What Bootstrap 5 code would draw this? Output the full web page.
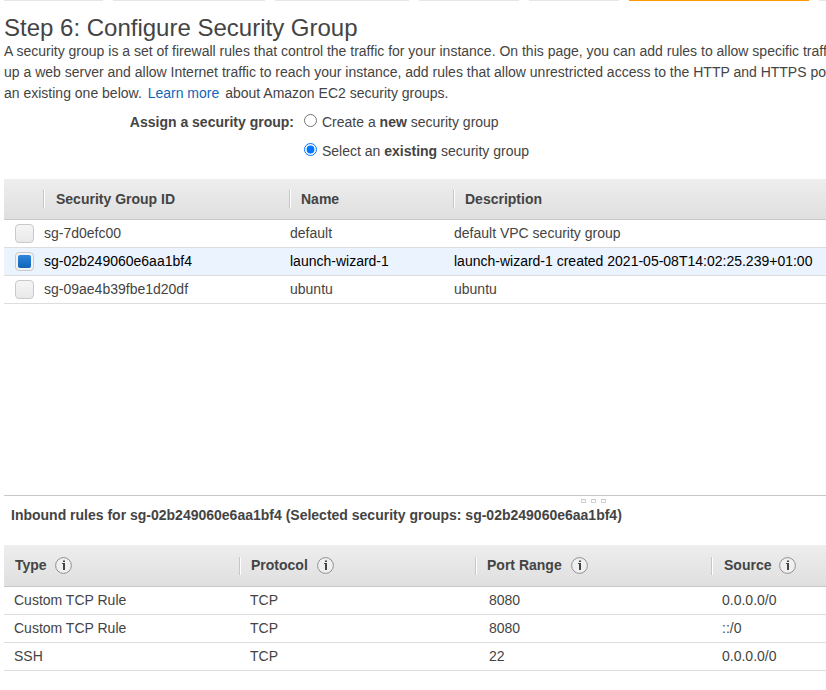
<!DOCTYPE html>
<html lang="en">
<head>
<meta charset="utf-8">
<meta name="viewport" content="width=device-width, initial-scale=1">
<title>Step 6: Configure Security Group</title>
<link href="https://cdn.jsdelivr.net/npm/bootstrap@5.3.0/dist/css/bootstrap.min.css" rel="stylesheet">
<style>
body{font-family:"Liberation Sans",Arial,sans-serif;font-size:14px;line-height:21px;color:#444;background:#fff;height:690px}
.page{padding-left:4px}
.steps{height:1px;gap:10px}
.steps span{background:#e6e6e6;flex:none}
.steps .current{background:#ff9900}
.s1{width:99px}.s2{width:152px}.s3{width:134px}.s4{width:100px}.s5{width:90px}.s6{width:180px}.s7{width:40px}
h1{font-size:24px;line-height:28px;margin:13px 0 0;color:#444;font-weight:400}
.intro{height:63px;margin-top:-1px}
.intro a{color:#1166bb;margin:0 2px 0 2px}
.assign{margin-top:8px;line-height:20px}
.assign-label{width:290px}
.choice{height:29px}
.choice input{width:13px;height:13px;margin:2px 5px 0 10px;flex:none}
.groups{margin-top:9px}
.grid-head{height:41px;background:linear-gradient(#eee,#dfdfdf);border-bottom:1px solid #c8c8c8;font-weight:700}
.grid-head>div{flex:none;height:18px;line-height:18px}
.groups .grid-head>div{margin-top:-1px}
.detail .grid-head{height:42px}
.detail .grid-head>div{line-height:16px}
.split{border-left:1px solid #c6c6c6;box-shadow:inset 1px 0 #fff}
.grid-row{height:28px;line-height:26px;border-bottom:1px solid #ddd}
.grid-row>div{flex:none}
.picked{background:#eaf3fe;color:#000}
.c0{width:39px}.c1{width:246px}.c2{width:164px}.c3{width:373px}
.groups .grid-row .c0{width:40px;padding-left:11px}
.groups .c1.split{padding-left:12px}
.groups .c2.split,.groups .c3.split{padding-left:11px}
.box{width:19px;height:19px;border:1px solid #c9c9c9;border-radius:4px;background:linear-gradient(#f5f5f5,#e9e9e9);display:block}
.box.on{padding:2px;background:#f3f3f3}
.box.on::after{content:"";display:block;width:13px;height:13px;border-radius:2px;background:linear-gradient(#2b86dc,#1264b6)}
.detail{margin-top:191px;border-top:1px solid #c8c8c8}
.grip{height:9px;padding:3px 0 0 577px;gap:5px}
.grip i{width:5px;height:4px;border:1px solid #d0d0d0;border-top-color:#c4c4c4;border-radius:1px;flex:none}
.detail-title{height:40px;line-height:20px;padding-left:7px;font-weight:700}
.d1{width:235px}.d2,.d3{width:236px}.d4{width:115px}
.grid-head .d1{padding-left:11px}
.grid-head .split{padding-left:11px}
.grid-head .d4.split{padding-left:12px}
.grid-row .d1{padding-left:10px;width:236px}.grid-row .d2{padding-left:10px}.grid-row .d3{padding-left:13px}.grid-row .d4{padding-left:10px}
.info{width:17px;height:17px;margin-left:9px;flex:none}
.d1 .info{margin-left:8px}.d4 .info{margin-left:8px}
</style>
<script src="https://cdn.jsdelivr.net/npm/bootstrap@5.3.0/dist/js/bootstrap.bundle.min.js"></script>
</head>
<body class="overflow-hidden">
<svg class="d-none"><symbol id="info" viewBox="0 0 17 17"><circle cx="8.5" cy="8.5" r="7.9" fill="#f0f0f0" stroke="#8f8f8f"/><path d="M7 6h3v7H8V7H7zM8 3.5h2V5H8z" fill="#444"/></symbol></svg>
<main class="page overflow-hidden text-nowrap">
  <div class="steps d-flex"><span class="s1"></span><span class="s2"></span><span class="s3"></span><span class="s4"></span><span class="s5"></span><span class="s6 current"></span><span class="s7"></span></div>
  <h1>Step 6: Configure Security Group</h1>
  <p class="intro mb-0">A security group is a set of firewall rules that control the traffic for your instance. On this page, you can add rules to allow specific traff<br>up a web server and allow Internet traffic to reach your instance, add rules that allow unrestricted access to the HTTP and HTTPS po<br>an existing one below. <a class="text-decoration-none" href="#">Learn more</a> about Amazon EC2 security groups.</p>
  <form class="assign d-flex">
    <div class="assign-label text-end fw-bold">Assign a security group:</div>
    <div>
      <label class="choice d-flex"><input type="radio" name="assign"><span>Create a <b>new</b> security group</span></label>
      <label class="choice d-flex"><input type="radio" name="assign" checked><span>Select an <b>existing</b> security group</span></label>
    </div>
  </form>
  <section class="groups">
    <div class="grid-head d-flex align-items-center"><div class="c0"></div><div class="c1 split">Security Group ID</div><div class="c2 split">Name</div><div class="c3 split">Description</div></div>
    <div class="grid-row d-flex"><div class="c0 d-flex align-items-center"><span class="box"></span></div><div class="c1">sg-7d0efc00</div><div class="c2">default</div><div class="c3">default VPC security group</div></div>
    <div class="grid-row picked d-flex"><div class="c0 d-flex align-items-center"><span class="box on"></span></div><div class="c1">sg-02b249060e6aa1bf4</div><div class="c2">launch-wizard-1</div><div class="c3">launch-wizard-1 created 2021-05-08T14:02:25.239+01:00</div></div>
    <div class="grid-row d-flex"><div class="c0 d-flex align-items-center"><span class="box"></span></div><div class="c1">sg-09ae4b39fbe1d20df</div><div class="c2">ubuntu</div><div class="c3">ubuntu</div></div>
  </section>
  <section class="detail">
    <div class="grip d-flex"><i></i><i></i><i></i></div>
    <div class="detail-title">Inbound rules for sg-02b249060e6aa1bf4 (Selected security groups: sg-02b249060e6aa1bf4)</div>
    <div class="grid-head d-flex align-items-center"><div class="d1 d-flex">Type<svg class="info"><use href="#info"/></svg></div><div class="d2 split d-flex">Protocol<svg class="info"><use href="#info"/></svg></div><div class="d3 split d-flex">Port Range<svg class="info"><use href="#info"/></svg></div><div class="d4 split d-flex">Source<svg class="info"><use href="#info"/></svg></div></div>
    <div class="grid-row d-flex"><div class="d1">Custom TCP Rule</div><div class="d2">TCP</div><div class="d3">8080</div><div class="d4">0.0.0.0/0</div></div>
    <div class="grid-row d-flex"><div class="d1">Custom TCP Rule</div><div class="d2">TCP</div><div class="d3">8080</div><div class="d4">::/0</div></div>
    <div class="grid-row d-flex"><div class="d1">SSH</div><div class="d2">TCP</div><div class="d3">22</div><div class="d4">0.0.0.0/0</div></div>
  </section>
</main>
</body>
</html>
